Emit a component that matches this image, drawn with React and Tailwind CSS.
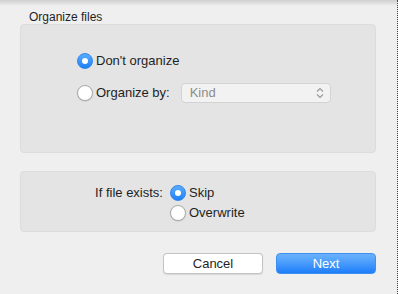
import { useState } from "react";

function Radio({ checked, label, onClick }) {
  return (
    <button
      type="button"
      onClick={onClick}
      className="flex items-center h-[20px] gap-[3px] text-[13px] text-[#1f1f1f]"
    >
      {checked ? (
        <span className="w-[16px] h-[16px] rounded-full bg-gradient-to-b from-[#5aacfd] to-[#1b7ff6] border border-[#2f86ee] flex items-center justify-center">
          <span className="w-[6px] h-[6px] rounded-full bg-white" />
        </span>
      ) : (
        <span className="w-[16px] h-[16px] rounded-full bg-white border border-[#a9a9a9] shadow-[0_0.5px_1px_rgba(0,0,0,0.15)]" />
      )}
      <span>{label}</span>
    </button>
  );
}

function App() {
  const [organize, setOrganize] = useState("none");
  const [exists, setExists] = useState("skip");

  return (
    <div className="relative w-[398px] h-[294px] overflow-hidden bg-[#efefef] font-['Liberation_Sans',Arial,sans-serif] border-r border-dotted border-[#444]">
      <div className="absolute top-0 left-0 right-0 h-[6px] bg-gradient-to-b from-[#cfcfcf] to-transparent" />

      <div className="pt-[11px] pl-[29px] h-[24px] text-[12px] leading-[13px] text-[#1f1f1f]">
        Organize files
      </div>

      <div className="ml-[20px] w-[356px] h-[129px] rounded-[4px] bg-[#e4e4e4] border border-[#dcdcdc] pt-[26px] pl-[56px]">
        <Radio
          checked={organize === "none"}
          label="Don't organize"
          onClick={() => setOrganize("none")}
        />
        <div className="flex items-center mt-[12px]">
          <Radio
            checked={organize === "by"}
            label="Organize by:"
            onClick={() => setOrganize("by")}
          />
          <div className="ml-[11px] w-[150px] h-[20px] rounded-[4px] bg-[#f2f2f2] border border-[#d3d3d3] flex items-center justify-between pl-[8px] pr-[6px] text-[13px] text-[#8c8c8c]">
            <span>Kind</span>
            <svg width="8" height="12" viewBox="0 0 8 12" fill="none" stroke="#9a9a9a" strokeWidth="1.2">
              <path d="M1 4.5 L4 1.5 L7 4.5" />
              <path d="M1 7.5 L4 10.5 L7 7.5" />
            </svg>
          </div>
        </div>
      </div>

      <div className="ml-[20px] mt-[18px] w-[356px] h-[61px] rounded-[4px] bg-[#e4e4e4] border border-[#dcdcdc] pt-[11px] flex">
        <div className="w-[142px] h-[20px] flex items-center justify-end text-[13px] text-[#1f1f1f]">
          If file exists:
        </div>
        <div className="ml-[7px] flex flex-col">
          <Radio checked={exists === "skip"} label="Skip" onClick={() => setExists("skip")} />
          <Radio checked={exists === "over"} label="Overwrite" onClick={() => setExists("over")} />
        </div>
      </div>

      <div className="mt-[21px] pr-[21px] flex justify-end gap-[13px]">
        <button className="w-[100px] h-[21px] rounded-[4px] bg-white border border-[#c4c4c4] shadow-[0_0.5px_1px_rgba(0,0,0,0.1)] text-[13px] text-[#1f1f1f]">
          Cancel
        </button>
        <button className="w-[100px] h-[21px] rounded-[4px] bg-gradient-to-b from-[#6bb2fb] to-[#1a7ffa] border border-[#3f8ff1] text-[13px] text-white">
          Next
        </button>
      </div>
    </div>
  );
}

export default App;
